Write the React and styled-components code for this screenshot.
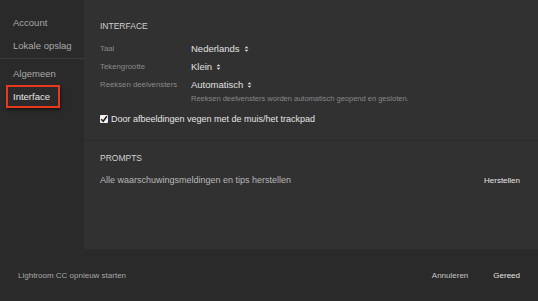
import React from "react";
import styled, { createGlobalStyle } from "styled-components";

const Global = createGlobalStyle`
  html, body { margin: 0; padding: 0; background: #2a2a2a; }
  body { font-family: "Liberation Sans", Arial, sans-serif; -webkit-font-smoothing: antialiased; }
`;

// Preferences dialog
export default function App() {
  return (
    <>
      <Global />
      <Dialog>
        <Body>
          <Sidebar>
            <NavGroup>
              <NavItem>Account</NavItem>
              <NavItem>Lokale opslag</NavItem>
            </NavGroup>
            <NavGroup>
              <NavItem>Algemeen</NavItem>
              <NavItem active>Interface</NavItem>
            </NavGroup>
          </Sidebar>

          <Main>
            {/* interface settings */}
            <Section height={140}>
              <Heading>INTERFACE</Heading>
              <Grid>
                <Label>Taal</Label>
                <Select>Nederlands <Arrows /></Select>
                <Label>Tekengrootte</Label>
                <Select>Klein <Arrows /></Select>
                <Label>Reeksen deelvensters</Label>
                <Select>Automatisch <Arrows /></Select>
                <span />
                <Hint>Reeksen deelvensters worden automatisch geopend en gesloten.</Hint>
              </Grid>
              <Check>
                <Box>
                  <svg width="8" height="8" viewBox="0 0 8 8">
                    <path d="M1.2 4.2 L3.2 6.2 L6.9 1.3" fill="none" stroke="#222" strokeWidth="1.6" />
                  </svg>
                </Box>
                Door afbeeldingen vegen met de muis/het trackpad
              </Check>
            </Section>

            {/* prompts */}
            <Section>
              <Heading>PROMPTS</Heading>
              <Row>
                <RowText>Alle waarschuwingsmeldingen en tips herstellen</RowText>
                <LinkButton>Herstellen</LinkButton>
              </Row>
            </Section>
          </Main>
        </Body>

        <Footer>
          <FooterText>Lightroom CC opnieuw starten</FooterText>
          <Actions>
            <LinkButton dim>Annuleren</LinkButton>
            <LinkButton>Gereed</LinkButton>
          </Actions>
        </Footer>
      </Dialog>
    </>
  );
}

function Arrows() {
  return (
    <svg width="5" height="8" viewBox="0 0 5 8" style={{ marginLeft: 4 }}>
      <path d="M0.6 3.2 L2.5 1.2 L4.4 3.2 Z M0.6 4.8 L2.5 6.8 L4.4 4.8 Z" fill="#ddd" />
    </svg>
  );
}

const Dialog = styled.div`
  width: 538px;
  height: 301px;
  display: flex;
  flex-direction: column;
  background: #2a2a2a;
  overflow: hidden;
`;

const Body = styled.div`
  display: flex;
  height: 249px;
`;

const Sidebar = styled.nav`
  width: 84px;
  flex-shrink: 0;
  display: flex;
  flex-direction: column;
`;

const NavGroup = styled.div`
  padding: 11px 0 1px 0;
  display: flex;
  flex-direction: column;
  & + & {
    border-top: 1px solid #3a3a3a;
    padding-top: 3px;
  }
`;

const NavItem = styled.div`
  width: fit-content;
  min-width: 54px;
  height: 23px;
  margin-left: 6px;
  box-sizing: border-box;
  padding: 0 7px 0 5px;
  display: flex;
  align-items: center;
  white-space: nowrap;
  font-size: 9.5px;
  color: ${(p) => (p.active ? "#e6e6e6" : "#a9a9a9")};
  border: 2px solid ${(p) => (p.active ? "#e8391f" : "transparent")};
  box-shadow: ${(p) => (p.active ? "1px 2px 3px rgba(0,0,0,0.5)" : "none")};
`;

const Main = styled.main`
  flex: 1;
  background: #313131;
  display: flex;
  flex-direction: column;
`;

const Section = styled.section`
  height: ${(p) => (p.height ? `${p.height}px` : "auto")};
  flex: ${(p) => (p.height ? "none" : "1")};
  box-sizing: border-box;
  padding: 20px 16px 0 16px;
  & + & {
    border-top: 1px solid #2c2c2c;
    padding-top: 11px;
  }
`;

const Heading = styled.h2`
  margin: 0 0 10px;
  font-size: 8.5px;
  line-height: 12px;
  font-weight: normal;
  color: #d0d0d0;
`;

const Grid = styled.div`
  display: grid;
  grid-template-columns: 91px 1fr;
  row-gap: 5px;
  align-items: center;
`;

const Label = styled.span`
  font-size: 7.8px;
  color: #8a8a8a;
  line-height: 13px;
`;

const Select = styled.span`
  display: flex;
  align-items: center;
  font-size: 9.5px;
  color: #e0e0e0;
  line-height: 13px;
`;

const Hint = styled.span`
  font-size: 7.5px;
  color: #888;
  line-height: 10px;
  margin-top: -2px;
`;

const Check = styled.label`
  display: flex;
  align-items: center;
  gap: 3px;
  margin-top: 9px;
  font-size: 9px;
  line-height: 12px;
  color: #e4e4e4;
`;

const Box = styled.span`
  width: 8px;
  height: 8px;
  background: #f2f2f2;
  border-radius: 1px;
  display: flex;
  align-items: center;
  justify-content: center;
`;

const Row = styled.div`
  display: flex;
  justify-content: space-between;
  align-items: center;
  line-height: 12px;
  padding-right: 2px;
`;

const RowText = styled.span`
  font-size: 9px;
  color: #b8b8b8;
`;

const LinkButton = styled.button`
  background: none;
  border: none;
  padding: 0;
  font-family: inherit;
  font-size: 8px;
  color: ${(p) => (p.dim ? "#c4c4c4" : "#e6e6e6")};
`;

const Footer = styled.footer`
  flex: 1;
  display: flex;
  align-items: center;
  justify-content: space-between;
  padding: 0 18px 0 18px;
`;

const FooterText = styled.span`
  font-size: 8px;
  color: #a8a8a8;
`;

const Actions = styled.div`
  display: flex;
  gap: 25px;
`;
